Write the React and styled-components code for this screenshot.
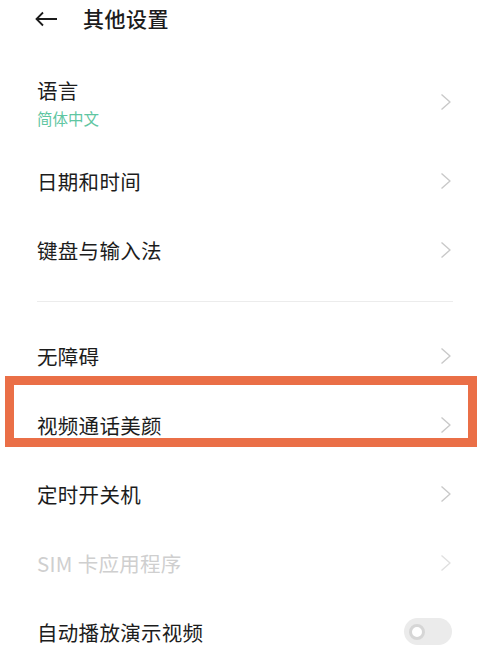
import styled, { createGlobalStyle } from 'styled-components'

const Global = createGlobalStyle`
	body { margin: 0; background: #fff; font-family: "Noto Sans CJK SC", "Noto Sans", sans-serif; }
	* { box-sizing: border-box; }
`

const Page = styled.div`width: 486px; height: 649px; overflow: hidden; background: #fff; color: #1c1c1c;`,
	Header = styled.div`display: flex; align-items: center; height: 37px; padding-left: 35px; gap: 25px; margin-bottom: 20px;`,
	Title = styled.h1`margin: 0; font-size: 21px; font-weight: 500; line-height: 1; letter-spacing: 0.5px;`,
	Row = styled.div`position: relative; display: flex; align-items: center; justify-content: space-between; padding: 0 34px 0 37px; height: ${p => p.$h || 69}px;`,
	Texts = styled.div`display: flex; flex-direction: column;`,
	Label = styled.span`font-size: 20.5px; line-height: 30px; color: ${p => p.$muted ? '#cfcfcf' : '#1c1c1c'}; letter-spacing: 0.3px;`,
	Sub = styled.span`font-size: 15.5px; line-height: 22px; margin-top: 2px; color: #5fc6a2;`,
	Divider = styled.div`height: 1px; background: #ececec; margin: 17px 33px 19px 37px;`,
	Marker = styled.div`position: absolute; left: 5px; top: -14px; width: 472px; height: 71px; border: 9px solid #ea6f47; pointer-events: none;`,
	Switch = styled.div`width: 48px; height: 27px; border-radius: 14px; background: #ebebeb; display: flex; align-items: center; padding-left: 5px; margin-right: 0;`,
	Knob = styled.div`width: 16px; height: 16px; border-radius: 50%; background: #fff; border: 3px solid #d6d6d6;`

const Chevron = ({ color = '#c9c9c9' }) => (
	<svg width="12" height="18" viewBox="0 0 12 18" fill="none">
		<path d="M1.5 1.5 L10 9 L1.5 16.5" stroke={color} strokeWidth="1.4" strokeLinejoin="round" />
	</svg>
)

const Back = () => (
	<svg width="23" height="16" viewBox="0 0 23 16" fill="none">
		<path d="M8 1.5 L1.5 8 L8 14.5 M1.5 8 H22" stroke="#1c1c1c" strokeWidth="1.8" />
	</svg>
)

const items1 = ['日期和时间', '键盘与输入法']

export default function App() {
	return (
		<Page>
			<Global />
			<Header>
				<Back />
				<Title>其他设置</Title>
			</Header>
			<Row $h={89}>
				<Texts>
					<Label>语言</Label>
					<Sub>简体中文</Sub>
				</Texts>
				<Chevron />
			</Row>
			{items1.map(t => (
				<Row key={t}><Label>{t}</Label><Chevron /></Row>
			))}
			<Divider />
			<Row><Label>无障碍</Label><Chevron /></Row>
			<Row>
				<Label>视频通话美颜</Label><Chevron />
				<Marker />
			</Row>
			<Row><Label>定时开关机</Label><Chevron /></Row>
			<Row><Label $muted>SIM 卡应用程序</Label><Chevron color="#e0e0e0" /></Row>
			<Row>
				<Label>自动播放演示视频</Label>
				<Switch><Knob /></Switch>
			</Row>
		</Page>
	)
}
